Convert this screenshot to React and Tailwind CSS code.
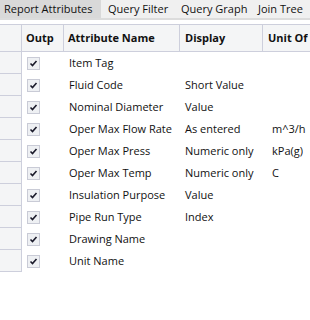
import React from "react";

const rows = [
  ["Item Tag", "", ""],
  ["Fluid Code", "Short Value", ""],
  ["Nominal Diameter", "Value", ""],
  ["Oper Max Flow Rate", "As entered", "m^3/h"],
  ["Oper Max Press", "Numeric only", "kPa(g)"],
  ["Oper Max Temp", "Numeric only", "C"],
  ["Insulation Purpose", "Value", ""],
  ["Pipe Run Type", "Index", ""],
  ["Drawing Name", "", ""],
  ["Unit Name", "", ""],
];

const Check = () => (
  <div className="w-[13px] h-[13px] border border-[#c9cbd6] bg-[#eef0f3] flex items-center justify-center">
    <svg width="9" height="9" viewBox="0 0 9 9">
      <path d="M1.5 4.5 L3.5 6.5 L7.5 2" stroke="#1a1a2a" strokeWidth="1.6" fill="none" />
    </svg>
  </div>
);

export default function App() {
  return (
    <div className="w-[310px] h-[320px] bg-white overflow-hidden text-[11px] text-[#111]" style={{ fontFamily: '"Open Sans", "Noto Sans", sans-serif' }}>
      <div className="h-[18px] bg-[#f0f0f0] flex items-stretch whitespace-nowrap">
        <div className="w-[101px] bg-[#d9d9d9] pl-[4px] flex items-center">Report Attributes</div>
        <div className="pl-[7px] w-[75px] flex items-center">Query Filter</div>
        <div className="pl-[5px] w-[78px] flex items-center">Query Graph</div>
        <div className="pl-[4px] flex items-center">Join Tree</div>
      </div>
      <div className="h-[2px] bg-[#dcdcdc]" />
      <div className="h-[4px]" />
      <div className="flex h-[28px] bg-[#f4f5f6] border-y border-[#cdcfdc] font-bold whitespace-nowrap">
        <div className="w-[22px] border-r border-[#cdcfdc]" />
        <div className="w-[42px] border-r border-[#cdcfdc] pl-[4px] flex items-center overflow-hidden">Outp</div>
        <div className="w-[116px] border-r border-[#cdcfdc] pl-[4px] flex items-center overflow-hidden">Attribute Name</div>
        <div className="w-[83px] border-r border-[#cdcfdc] pl-[5px] flex items-center overflow-hidden">Display</div>
        <div className="pl-[5px] flex items-center overflow-hidden">Unit Of</div>
      </div>
      {rows.map(([a, d, u]) => (
        <div key={a} className="flex h-[22px] whitespace-nowrap">
          <div className="w-[22px] bg-[#f4f5f6] border-r border-b border-[#cdcfdc]" />
          <div className="w-[42px] pl-[5px] flex items-center">
            <Check />
          </div>
          <div className="w-[116px] pl-[5px] flex items-center overflow-hidden">{a}</div>
          <div className="w-[83px] pl-[5px] flex items-center overflow-hidden">{d}</div>
          <div className="pl-[9px] flex items-center overflow-hidden">{u}</div>
        </div>
      ))}
    </div>
  );
}
